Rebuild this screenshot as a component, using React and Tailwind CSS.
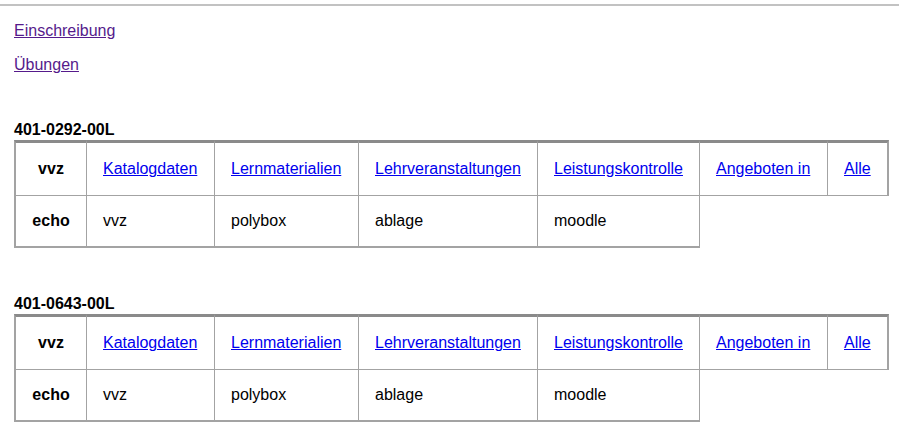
import React from 'react'

const links = [
  { label: 'Katalogdaten', w: 'w-[128px]' },
  { label: 'Lernmaterialien', w: 'w-[144px]' },
  { label: 'Lehrveranstaltungen', w: 'w-[179px]' },
  { label: 'Leistungskontrolle', w: 'w-[162px]' },
  { label: 'Angeboten in', w: 'w-[128px]' },
  { label: 'Alle', w: 'w-[61px]' },
]
const echo = ['vvz', 'polybox', 'ablage', 'moodle']
const courses = ['401-0292-00L', '401-0643-00L']

function cx(...s) { return s.filter(Boolean).join(' ') }

function CourseTable({ code }) {
  return (
    <section className="mt-[47px]">
      <div className="font-bold leading-[18px]">{code}</div>
      <table className="mt-px w-[875px] table-fixed border-separate border-spacing-0">
        <tbody>
          <tr>
            <th className="w-[73px] border-[#a3a3a3] border-t-[#8a8a8a] border-t-[3px] border-l-2 border-r border-b px-4 py-[17px] font-bold text-center leading-[18px]">vvz</th>
            {links.map((l, i) => (
              <td
                key={l.label}
                className={cx(
                  l.w,
                  'border-[#a3a3a3] border-t-[#8a8a8a] border-t-[3px] border-b px-4 py-[17px] leading-[18px] whitespace-nowrap',
                  i === links.length - 1 ? 'border-r-2' : 'border-r'
                )}
              >
                <a href="#" className="text-[#0000ee] underline">{l.label}</a>
              </td>
            ))}
          </tr>
          <tr>
            <th className="border-[#a3a3a3] border-l-2 border-r border-b-2 px-4 py-4 font-bold text-center leading-[18px]">echo</th>
            {echo.map(e => (
              <td key={e} className="border-[#a3a3a3] border-r border-b-2 px-4 py-4 leading-[18px]">{e}</td>
            ))}
          </tr>
        </tbody>
      </table>
    </section>
  )
}

export default function App() {
  return (
    <div className="min-h-screen bg-white text-black text-[16px] font-['Liberation_Sans',Arial,sans-serif]">
      <div className="pt-1">
        <div className="h-[2px] bg-[#c2c2c2]" />
      </div>
      <div className="px-[14px]">
        <nav className="mt-4 flex flex-col items-start gap-4 leading-[18px]">
          <a href="#" className="text-[#551a8b] underline">Einschreibung</a>
          <a href="#" className="text-[#551a8b] underline">Übungen</a>
        </nav>
        {courses.map(c => <CourseTable key={c} code={c} />)}
      </div>
    </div>
  )
}
